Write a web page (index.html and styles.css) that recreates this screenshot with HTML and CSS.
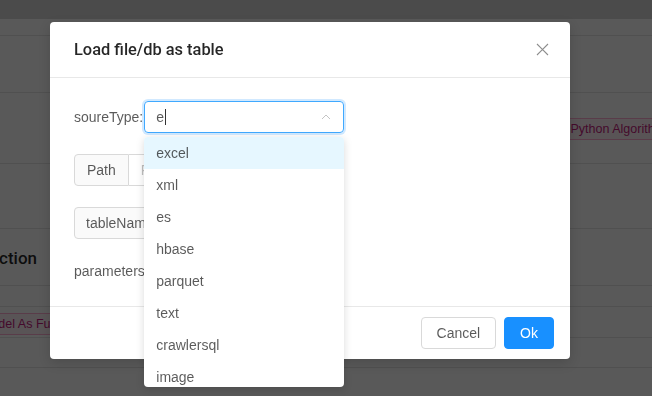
FILE: index.html
```html
<!DOCTYPE html>
<html lang="en">
<head>
    <meta charset="UTF-8">
    <title>Load file/db as table</title>
    <link rel="stylesheet" href="styles.css">
</head>
<body>
    <div class="page">
        <div class="topbar"></div>
        <div class="row r1"></div>
        <div class="row r2"></div>
        <div class="row r3">
            <span class="tag tag-right">Python Algorithm</span>
        </div>
        <div class="row r4"></div>
        <div class="row r5">
            <div class="clip"><h3 class="section-title">Section</h3></div>
        </div>
        <div class="row r6"></div>
        <div class="row r7">
            <span class="tag tag-left">Model As Function</span>
        </div>
        <div class="row r8"></div>
    </div>

    <div class="mask"></div>

    <div class="modal">
        <div class="modal-header">
            <div class="modal-title">Load file/db as table</div>
            <span class="close">
                <svg width="13" height="13" viewBox="0 0 13 13"><path d="M1 1 L12 12 M12 1 L1 12" stroke="currentColor" stroke-width="1.1" fill="none"/></svg>
            </span>
        </div>
        <div class="modal-body">
            <div class="form-row">
                <span class="label">soureType:</span>
                <div class="select">
                    <div class="select-box">
                        <span class="select-text">e</span><span class="caret"></span>
                        <svg class="arrow" width="12" height="12" viewBox="0 0 12 12"><path d="M2 8 L6 4 L10 8" stroke="currentColor" stroke-width="1" fill="none"/></svg>
                    </div>
                    <ul class="dropdown">
                        <li class="active">excel</li>
                        <li>xml</li>
                        <li>es</li>
                        <li>hbase</li>
                        <li>parquet</li>
                        <li>text</li>
                        <li>crawlersql</li>
                        <li>image</li>
                        <li>jdbc</li>
                    </ul>
                </div>
            </div>
            <div class="form-row">
                <div class="btn-group">
                    <span class="seg">Path</span><span class="seg seg-muted">FileUpload</span>
                </div>
            </div>
            <div class="form-row">
                <div class="input-group">
                    <span class="addon">tableName</span><span class="input"></span>
                </div>
            </div>
            <div class="form-row last">
                <span class="label">parameters:</span>
            </div>
        </div>
        <div class="modal-footer">
            <button class="btn">Cancel</button>
            <button class="btn btn-primary">Ok</button>
        </div>
    </div>
</body>
</html>
```

FILE: styles.css
```css
* { box-sizing: border-box; }
body { margin: 0; background: #fff; font-family: "Liberation Sans", Arial, "Noto Sans CJK SC", sans-serif; font-size: 14px; color: rgba(0,0,0,0.65); overflow: hidden; height: 396px; }

.page { display: flex; flex-direction: column; overflow: hidden; width: 652px; }
.topbar { height: 19px; background: #d6d6d6; }
.row { border-bottom: 1px solid #e6e6e6; display: flex; align-items: center; }
.r1 { height: 17px; }
.r2 { height: 57px; }
.r3 { height: 71px; justify-content: flex-end; padding-top: 1px; }
.r4 { height: 65px; }
.r5 { height: 57px; }
.r6 { height: 21px; }
.r7 { height: 31px; padding-top: 4px; }
.r8 { height: 30px; }
.clip { width: 37px; overflow: hidden; display: flex; justify-content: flex-end; }
.section-title { margin: 0; font-family: Roboto, "Liberation Sans", sans-serif; font-size: 17px; font-weight: 500; color: rgba(0,0,0,0.85); white-space: nowrap; padding-top: 2px; }
.tag { display: inline-block; font-size: 12.5px; line-height: 20px; padding: 0 7px; border: 1px solid #ffadd2; background: #fff0f6; color: #c41d7f; border-radius: 4px; white-space: nowrap; flex-shrink: 0; }
.tag-right { margin-right: -21px; }
.tag-left { margin-left: -27px; }

.mask { position: fixed; inset: 0; background: rgba(0,0,0,0.65); }

.modal { position: absolute; top: 22px; left: 50px; width: 520px; background: #fff; border-radius: 4px; box-shadow: 0 4px 12px rgba(0,0,0,0.15); }
.modal-header { display: flex; align-items: center; justify-content: space-between; padding: 16px 24px; border-bottom: 1px solid #e8e8e8; height: 56px; }
.modal-title { font-family: Roboto, "Liberation Sans", sans-serif; font-size: 16.4px; line-height: 22px; font-weight: 500; color: rgba(0,0,0,0.85); }
.close { color: rgba(0,0,0,0.45); display: flex; margin-right: -3px; }

.modal-body { padding: 23px 24px 24px; }
.form-row { display: flex; align-items: center; margin-bottom: 21px; }
.form-row.last { margin-bottom: 0; line-height: 22px; }
.label { line-height: 22px; }

.select { position: relative; margin-left: 1px; }
.select-box { width: 200px; height: 32px; border: 1px solid #40a9ff; border-radius: 4px; box-shadow: 0 0 0 2px rgba(24,144,255,0.2); display: flex; align-items: center; padding: 0 11px; }
.select-text { color: rgba(0,0,0,0.65); line-height: 22px; }
.caret { width: 1px; height: 16px; background: #333; margin-left: 1px; }
.arrow { margin-left: auto; color: #c4c4c4; }
.dropdown { position: absolute; top: 36px; left: 0; width: 200px; max-height: 250px; overflow: hidden; margin: 0; padding: 0; list-style: none; background: #fff; border-radius: 4px; box-shadow: 0 2px 8px rgba(0,0,0,0.15); z-index: 2; }
.dropdown li { padding: 5px 12px; line-height: 22px; color: rgba(0,0,0,0.65); }
.dropdown li.active { background: #e6f7ff; }

.btn-group { display: flex; }
.seg { height: 32px; line-height: 30px; padding: 0 12px; border: 1px solid #d9d9d9; background: #fafafa; color: rgba(0,0,0,0.65); }
.seg:first-child { border-radius: 4px 0 0 4px; }
.seg:last-child { border-left: 0; border-radius: 0 4px 4px 0; background: #fff; }
.seg-muted { color: rgba(0,0,0,0.25); }

.input-group { display: flex; }
.addon { height: 32px; line-height: 30px; padding: 0 11px; border: 1px solid #d9d9d9; border-radius: 4px 0 0 4px; background: #fafafa; }
.input { width: 120px; height: 32px; border: 1px solid #d9d9d9; border-left: 0; border-radius: 0 4px 4px 0; }

.modal-footer { border-top: 1px solid #e8e8e8; padding: 10px 16px; display: flex; justify-content: flex-end; gap: 8px; }
.btn { height: 32px; padding: 0 15px; font-size: 14px; font-family: inherit; border: 1px solid #d9d9d9; border-radius: 4px; background: #fff; color: rgba(0,0,0,0.65); }
.btn-primary { background: #1890ff; border-color: #1890ff; color: #fff; }
```
